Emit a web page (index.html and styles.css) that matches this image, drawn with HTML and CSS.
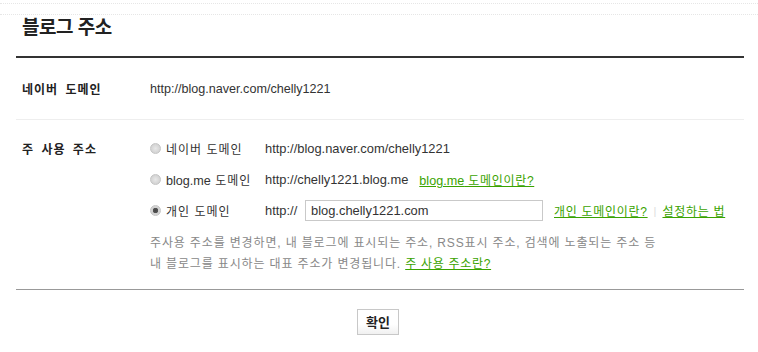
FILE: index.html
```html
<!DOCTYPE html>
<html lang="ko">
<head>
<meta charset="utf-8">
<title>블로그 주소</title>
<link rel="stylesheet" href="styles.css">
</head>
<body>
<div class="page">
  <div class="dots"></div>
  <div class="wrap">
    <h1 class="title">블로그 주소</h1>
    <div class="row row-first">
      <div class="label">네이버 도메인</div>
      <div class="value">http://blog.naver.com/chelly1221</div>
    </div>
    <div class="row row-main">
      <div class="label label-top">주 사용 주소</div>
      <div class="opts">
        <div class="opt">
          <span class="radio"></span>
          <span class="opt-name">네이버 도메인</span>
          <span class="url">http://blog.naver.com/chelly1221</span>
        </div>
        <div class="opt">
          <span class="radio"></span>
          <span class="opt-name"><span class="latin">blog.me</span> 도메인</span>
          <span class="url">http://chelly1221.blog.me</span>
          <a class="link link-gap" href="#"><span class="latin">blog.me</span> 도메인이란?</a>
        </div>
        <div class="opt">
          <span class="radio checked"></span>
          <span class="opt-name">개인 도메인</span>
          <span class="url url-short">http://</span>
          <span class="field">blog.chelly1221.com</span>
          <a class="link" href="#">개인 도메인이란?</a>
          <span class="sep">|</span>
          <a class="link" href="#">설정하는 법</a>
        </div>
        <p class="desc">주사용 주소를 변경하면, 내 블로그에 표시되는 주소, RSS표시 주소, 검색에 노출되는 주소 등<br>내 블로그를 표시하는 대표 주소가 변경됩니다. <a class="link" href="#">주 사용 주소란?</a></p>
      </div>
    </div>
    <div class="actions">
      <button class="btn" type="button">확인</button>
    </div>
  </div>
</div>
</body>
</html>
```
FILE: styles.css
```css
html, body {
  margin: 0;
  padding: 0;
  background: #fff;
}
body {
  font-family: "Liberation Sans", "Noto Sans CJK KR", sans-serif;
  font-size: 12px;
  color: #333;
}
.page {
  width: 758px;
  height: 352px;
  position: relative;
  overflow: hidden;
}
.dots {
  position: absolute;
  left: 0;
  right: 0;
  top: 3px;
  height: 10px;
  border-top: 1px dotted #e6e6e6;
  border-bottom: 1px dotted #e6e6e6;
}
.wrap {
  margin: 0 14px 0 16px;
}
.title {
  margin: 0;
  padding: 14px 0 18px 6px;
  height: 24px;
  line-height: 24px;
  font-size: 19px;
  font-weight: bold;
  color: #222;
  letter-spacing: -0.5px;
  border-bottom: 2px solid #333;
  font-family: "Noto Sans CJK KR", sans-serif;
}
.row {
  display: grid;
  grid-template-columns: 134px 1fr;
}
.row-first {
  height: 61px;
  align-items: center;
  border-bottom: 1px solid #eee;
}
.label {
  padding-left: 6px;
  font-weight: bold;
  color: #222;
  font-family: "Noto Sans CJK KR", sans-serif;
  letter-spacing: 1px;
  word-spacing: 3px;
}
.label-top {
  padding-top: 13px;
  line-height: 31px;
  align-self: start;
}
.value {
  font-size: 12.6px;
}
.row-main {
  padding-bottom: 14px;
  border-bottom: 1px solid #999;
}
.opts {
  padding-top: 13px;
}
.opt {
  display: flex;
  align-items: center;
  height: 31px;
}
.radio {
  width: 11px;
  height: 11px;
  border-radius: 50%;
  border: 1px solid #c4c4c4;
  background: radial-gradient(circle at 50% 50%, #e8e8e8 0, #d6d6d6 60%, #cfcfcf 100%);
  box-sizing: border-box;
  margin-right: 5px;
  flex: none;
}
.radio.checked {
  background: radial-gradient(circle at 50% 50%, #444 0, #555 2.5px, #d0d0d0 3px, #dcdcdc 100%);
}
.opt-name {
  width: 99px;
  font-family: "Noto Sans CJK KR", sans-serif;
  color: #333;
  letter-spacing: 1px;
}
.latin {
  font-family: "Liberation Sans", sans-serif;
  font-size: 12.6px;
  letter-spacing: 0;
}
.url {
  font-size: 12.9px;
  color: #333;
}
.url-short {
  width: 40px;
}
.link {
  color: #3aa300;
  text-decoration: underline;
  letter-spacing: 0.7px;
}
.link-gap {
  margin-left: 11px;
}
.field {
  width: 238px;
  height: 21px;
  box-sizing: border-box;
  border: 1px solid #c9c9c9;
  padding-left: 5px;
  line-height: 19px;
  font-size: 12.9px;
  color: #333;
  margin-right: 11px;
}
.sep {
  color: #ddd;
  margin: 0 6px 0 6px;
  font-size: 11px;
  letter-spacing: 0;
}
.desc {
  margin: 7px 0 0;
  line-height: 21px;
  color: #888;
  letter-spacing: 0.85px;
}
.actions {
  display: flex;
  justify-content: center;
  padding: 19px 4px 0 0;
}
.btn {
  height: 26px;
  padding: 0 8px;
  border: 1px solid #c8c8c8;
  background: linear-gradient(#fff 60%, #f0f0f0);
  font-family: "Noto Sans CJK KR", sans-serif;
  font-size: 13px;
  font-weight: bold;
  color: #222;
  line-height: 22px;
}
```
